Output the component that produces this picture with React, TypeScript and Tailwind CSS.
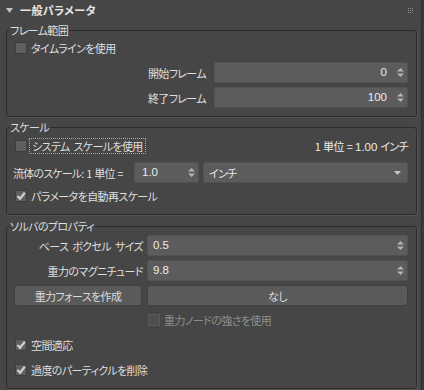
import React from "react";

function Check({ checked = false }: { checked?: boolean }) {
  return (
    <div className="w-[12px] h-[12px] shrink-0 bg-[#5f5f5f] border border-[#3d3d3d] flex items-center justify-center">
      {checked && (
        <svg width="10" height="10" viewBox="0 0 10 10">
          <path d="M1.5 5 L4 7.8 L8.8 1.8" stroke="#d0d0d0" strokeWidth="2.2" fill="none" strokeLinejoin="miter" />
        </svg>
      )}
    </div>
  );
}

function SpinArrows() {
  return (
    <svg width="7" height="9" viewBox="0 0 7 9" className="shrink-0">
      <path d="M3.5 0 L7 3.5 L0 3.5 Z M0 5.5 L7 5.5 L3.5 9 Z" fill="#b4b4b4" />
    </svg>
  );
}

function Spinner({ value, align = "right", pl = "" }: { value: string; align?: "left" | "right"; pl?: string }) {
  return (
    <div className="h-[21px] w-full bg-[#5c5c5c] border border-[#525252] rounded-[2px] flex items-center pr-[3px]">
      <span
        className={
          "flex-1 font-['Liberation_Sans',sans-serif] tracking-normal text-[11.5px] text-[#ececec] leading-[19px] " +
          (align === "right" ? "text-right pr-[10px]" : "text-left " + pl)
        }
      >
        {value}
      </span>
      <SpinArrows />
    </div>
  );
}

export default function App() {
  return (
    <div className="w-[424px] h-[390px] bg-[#3a3a3a] flex overflow-hidden font-['Noto_Sans_CJK_JP',sans-serif] [font-feature-settings:'palt'] text-[11px] tracking-[-0.6px] [word-spacing:2px] text-[#dedede]">
      <div className="w-[422px] h-[390px] bg-[#464646] border-r border-[#2e2e2e] flex flex-col">
        {/* Title */}
        <div className="h-[20px] flex items-center relative">
          <svg width="7" height="5" viewBox="0 0 7 5" className="ml-[6px] mt-[1px]">
            <path d="M0 0 L7 0 L3.5 5 Z" fill="#c4c4c4" />
          </svg>
          <span className="ml-[7px] text-[11px] font-bold tracking-[0.4px] text-[#e6e6e6] leading-[14px]">一般パラメータ</span>
          <div className="ml-auto mr-[8px] grid grid-cols-3 gap-[1px]">
            {Array.from({ length: 9 }).map((_, i) => (
              <div key={i} className="w-[1px] h-[1px] bg-[#8c8c8c]" />
            ))}
          </div>
        </div>

        {/* Group 1 */}
        <fieldset className="mt-[3px] ml-[6px] w-[411px] border border-[#2c2c2c] rounded-[3px] shadow-[1px_1px_0_#545454]">
          <legend className="ml-[2px] px-[1px] leading-[14px]">フレーム範囲</legend>
          <div className="pt-[5px] pb-[8px] flex flex-col">
            <div className="h-[12px] flex items-center ml-[8px]">
              <Check />
              <span className="ml-[4px] leading-[12px]">タイムラインを使用</span>
            </div>
            <div className="mt-[8px] flex items-center">
              <span className="w-[199px] shrink-0 text-right leading-[14px]">開始フレーム</span>
              <div className="ml-[8px] w-[194px] shrink-0">
                <Spinner value="0" />
              </div>
            </div>
            <div className="mt-[4px] flex items-center">
              <span className="w-[199px] shrink-0 text-right leading-[14px]">終了フレーム</span>
              <div className="ml-[8px] w-[194px] shrink-0">
                <Spinner value="100" />
              </div>
            </div>
          </div>
        </fieldset>

        {/* Group 2 */}
        <fieldset className="mt-[3px] ml-[6px] w-[411px] border border-[#2c2c2c] rounded-[3px] shadow-[1px_1px_0_#545454]">
          <legend className="ml-[2px] px-[1px] leading-[14px]">スケール</legend>
          <div className="pt-[4px] pb-[12px] flex flex-col">
            <div className="h-[16px] flex items-center">
              <div className="ml-[8px]">
                <Check />
              </div>
              <span className="ml-[2px] h-[16px] px-[2px] border border-dotted border-[#a8a8a8] leading-[14px]">
                システム スケールを使用
              </span>
              <span className="ml-auto mr-[8px] leading-[14px] text-[#ececec] whitespace-pre [word-spacing:1px]">
                1 単位 = <span className="font-['Liberation_Sans',sans-serif] tracking-normal text-[11.5px]">1.00</span> インチ
              </span>
            </div>
            <div className="mt-[8px] flex items-center">
              <div className="ml-[6px] w-[121px] min-w-0 shrink-0 leading-[14px] whitespace-pre tracking-[-0.8px] [word-spacing:1px]">流体のスケール: 1 単位 =</div>
              <div className="w-[65px] shrink-0">
                <Spinner value="1.0" align="left" pl="pl-[7px]" />
              </div>
              <div className="ml-[4px] w-[205px] shrink-0 h-[21px] bg-[#5c5c5c] border border-[#525252] rounded-[2px] flex items-center pl-[5px] pr-[6px]">
                <span className="flex-1 leading-[14px] text-[#e6e6e6]">インチ</span>
                <svg width="7" height="4" viewBox="0 0 7 4">
                  <path d="M0 0 L7 0 L3.5 4 Z" fill="#c8c8c8" />
                </svg>
              </div>
            </div>
            <div className="mt-[7px] h-[12px] flex items-center ml-[8px]">
              <Check checked />
              <span className="ml-[4px] leading-[12px]">パラメータを自動再スケール</span>
            </div>
          </div>
        </fieldset>

        {/* Group 3 */}
        <fieldset className="mt-[4px] ml-[6px] w-[411px] border border-[#2c2c2c] rounded-[3px] shadow-[1px_1px_0_#545454]">
          <legend className="ml-[2px] px-[1px] leading-[14px]">ソルバのプロパティ</legend>
          <div className="pt-[2px] pb-[12px] flex flex-col">
            <div className="flex items-center">
              <span className="w-[136px] shrink-0 text-right leading-[14px] whitespace-nowrap">ベース ボクセル サイズ</span>
              <div className="ml-[4px] w-[261px] shrink-0">
                <Spinner value="0.5" align="left" pl="pl-[5px]" />
              </div>
            </div>
            <div className="mt-[4px] flex items-center">
              <span className="w-[136px] shrink-0 text-right leading-[14px] whitespace-nowrap">重力のマグニチュード</span>
              <div className="ml-[4px] w-[261px] shrink-0">
                <Spinner value="9.8" align="left" pl="pl-[5px]" />
              </div>
            </div>
            <div className="mt-[4px] flex items-center">
              <button className="ml-[7px] w-[128px] h-[21px] bg-[#5a5a5a] border border-[#3f3f3f] rounded-[3px] text-[#dcdcdc] leading-[14px]">
                重力フォースを作成
              </button>
              <button className="ml-[5px] w-[261px] h-[21px] bg-[#5a5a5a] border border-[#3f3f3f] rounded-[3px] text-[#dcdcdc] leading-[14px]">
                なし
              </button>
            </div>
            <div className="mt-[8px] h-[12px] flex items-center ml-[141px]">
              <div className="w-[12px] h-[12px] shrink-0 bg-[#4f4f4f] border border-[#5a5a5a]" />
              <span className="ml-[4px] leading-[12px] text-[#8e8e8e]">重力ノードの強さを使用</span>
            </div>
            <div className="mt-[13px] h-[12px] flex items-center ml-[8px]">
              <Check checked />
              <span className="ml-[4px] leading-[12px]">空間適応</span>
            </div>
            <div className="mt-[13px] h-[12px] flex items-center ml-[8px]">
              <Check checked />
              <span className="ml-[4px] leading-[12px]">過度のパーティクルを削除</span>
            </div>
          </div>
        </fieldset>
      </div>
    </div>
  );
}
